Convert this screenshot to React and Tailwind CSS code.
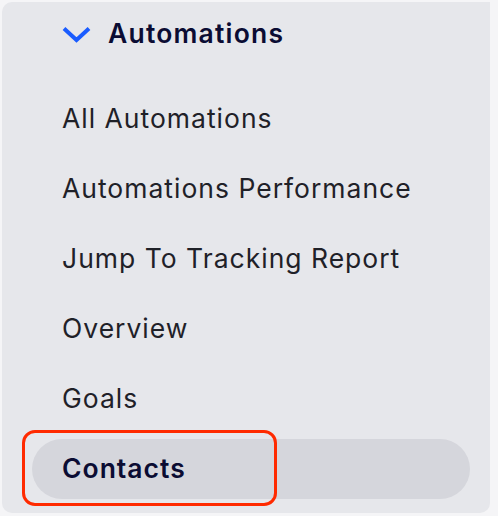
import React from 'react';

const items = [
    'All Automations',
    'Automations Performance',
    'Jump To Tracking Report',
    'Overview',
    'Goals',
];

const App = () => {
    return (
        <div className="w-[498px] h-[516px] bg-[#f5f5f7] pt-[2px] pl-[2px] pr-[8px] pb-[3px] font-['Inter',sans-serif]">
            <div className="h-full bg-[#e6e7eb] rounded-tl-[10px] rounded-b-[10px] flex flex-col">
                <div className="flex items-center h-[63px] pt-[1px] pl-[60px] gap-[17px]">
                    <svg width="29" height="17" viewBox="0 0 29 17" fill="none">
                        <path d="M2 2.5 L14.5 14 L27 2.5" stroke="#1a5cff" strokeWidth="4" strokeLinejoin="miter" />
                    </svg>
                    <span className="text-[26.5px] font-semibold text-[#0b0c33] tracking-[1.2px]">Automations</span>
                </div>
                <ul className="flex flex-col pt-[19px]">
                    {items.map((label) => (
                        <li key={label} className="h-[70px] flex items-center pl-[60px] text-[26.5px] tracking-[1px] text-[#1f2128]">
                            {label}
                        </li>
                    ))}
                    <li className="relative h-[70px] flex items-center pl-[30px] pr-[20px]">
                        <div className="w-full h-[60px] rounded-full bg-[#d5d6dc] flex items-center pl-[30px] text-[26.5px] tracking-[1px] font-semibold text-[#0b0c33]">
                            Contacts
                        </div>
                        <div className="absolute left-[20px] top-[-4px] w-[255px] h-[76px] border-[3px] border-[#ff2a00] rounded-[13px]" />
                    </li>
                </ul>
            </div>
        </div>
    );
};

export default App;
